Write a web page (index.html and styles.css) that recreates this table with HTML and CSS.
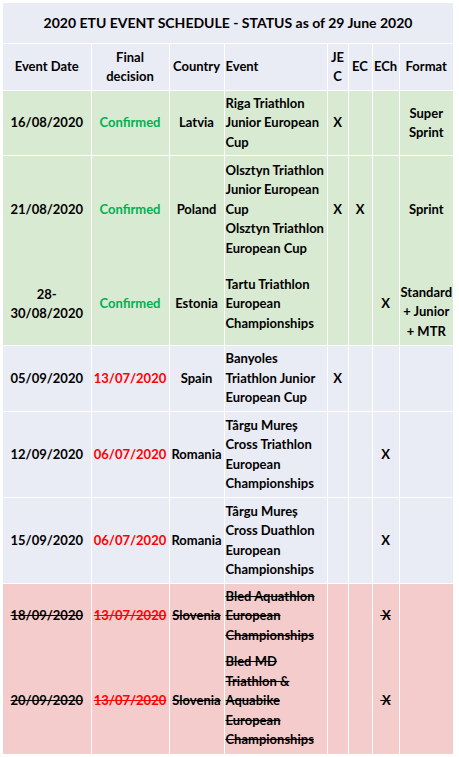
FILE: index.html
```html
<!DOCTYPE html>
<html lang="en">
<head>
<meta charset="utf-8">
<title>2020 ETU Event Schedule</title>
<link rel="stylesheet" href="styles.css">
</head>
<body>
<table class="sched">
  <colgroup>
    <col class="c-date"><col class="c-dec"><col class="c-country"><col class="c-event">
    <col class="c-jec"><col class="c-ec"><col class="c-ech"><col class="c-format">
  </colgroup>
  <tr class="title">
    <th colspan="8">2020 ETU EVENT SCHEDULE - STATUS as of 29 June 2020</th>
  </tr>
  <tr class="head">
    <th>Event Date</th>
    <th>Final<br>decision</th>
    <th>Country</th>
    <th class="ev">Event</th>
    <th>JE<br>C</th>
    <th>EC</th>
    <th>ECh</th>
    <th>Format</th>
  </tr>
  <tr class="ok r65">
    <td>16/08/2020</td>
    <td class="conf">Confirmed</td>
    <td>Latvia</td>
    <td class="ev">Riga Triathlon<br>Junior European<br>Cup</td>
    <td>X</td><td></td><td></td>
    <td>Super<br>Sprint</td>
  </tr>
  <tr class="ok r108 joined">
    <td>21/08/2020</td>
    <td class="conf">Confirmed</td>
    <td>Poland</td>
    <td class="ev">Olsztyn Triathlon<br>Junior European<br>Cup<br>Olsztyn Triathlon<br>European Cup</td>
    <td>X</td><td>X</td><td></td>
    <td>Sprint</td>
  </tr>
  <tr class="ok r83">
    <td>28-<br>30/08/2020</td>
    <td class="conf">Confirmed</td>
    <td>Estonia</td>
    <td class="ev">Tartu Triathlon<br>European<br>Championships</td>
    <td></td><td></td><td>X</td>
    <td class="low">Standard<br>+ Junior<br>+ MTR</td>
  </tr>
  <tr class="pend r66">
    <td>05/09/2020</td>
    <td class="due">13/07/2020</td>
    <td>Spain</td>
    <td class="ev">Banyoles<br>Triathlon Junior<br>European Cup</td>
    <td>X</td><td></td><td></td>
    <td></td>
  </tr>
  <tr class="pend r86">
    <td>12/09/2020</td>
    <td class="due">06/07/2020</td>
    <td>Romania</td>
    <td class="ev">Târgu Mureș<br>Cross Triathlon<br>European<br>Championships</td>
    <td></td><td></td><td>X</td>
    <td></td>
  </tr>
  <tr class="pend r86">
    <td>15/09/2020</td>
    <td class="due">06/07/2020</td>
    <td>Romania</td>
    <td class="ev">Târgu Mureș<br>Cross Duathlon<br>European<br>Championships</td>
    <td></td><td></td><td>X</td>
    <td></td>
  </tr>
  <tr class="off r65 joined">
    <td>18/09/2020</td>
    <td class="due">13/07/2020</td>
    <td>Slovenia</td>
    <td class="ev">Bled Aquathlon<br>European<br>Championships</td>
    <td></td><td></td><td>&#8201;X</td>
    <td></td>
  </tr>
  <tr class="off r105">
    <td>20/09/2020</td>
    <td class="due">13/07/2020</td>
    <td>Slovenia</td>
    <td class="ev">Bled MD<br>Triathlon &amp;<br>Aquabike<br>European<br>Championships</td>
    <td></td><td></td><td>&#8201;X</td>
    <td></td>
  </tr>
</table>
</body>
</html>
```

FILE: styles.css
```css
html, body {
  margin: 0;
  padding: 0;
  background: #ffffff;
}

body {
  padding: 3px 0 0 3px;
}

.sched {
  border-collapse: collapse;
  table-layout: fixed;
  width: 450px;
  font-family: Lato, "Open Sans", sans-serif;
  font-weight: 700;
  font-size: 13px;
  line-height: 19.4px;
  color: #000;
}

.c-date { width: 88px; }
.c-dec { width: 78px; }
.c-country { width: 55px; }
.c-event { width: 103px; }
.c-jec { width: 21px; }
.c-ec { width: 24px; }
.c-ech { width: 27px; }
.c-format { width: 54px; }

.sched th,
.sched td {
  border: 1px solid #ffffff;
  padding: 0 1px;
  text-align: center;
  vertical-align: middle;
  white-space: nowrap;
  font-weight: 700;
}

.sched .ev {
  text-align: left;
  padding-left: 1px;
}

.title th {
  height: 40px;
  font-size: 14px;
  background: #e9ebf5;
  border-left-style: hidden;
  border-top-style: hidden;
  border-right-style: hidden;
}

.head th {
  height: 46px;
  background: #e9ebf5;
}

.ok td { background: #d9ead3; }
.pend td { background: #e9ebf5; }
.off td {
  background: #f4cccc;
  text-decoration: line-through;
}

.conf { color: #00b050; }
.due { color: #ff0000; }

.joined td { border-bottom-style: hidden; }

.r65 td { height: 64px; }
.r66 td { height: 65px; }
.r83 td { height: 82px; }
.r86 td { height: 85px; }
.r105 td { height: 106px; }
.r108 td { height: 107px; }

.sched .r83 .low {
  padding-top: 16px;
  height: 66px;
}

.sched tr > :first-child { border-left-style: hidden; }
.sched tr > :last-child { border-right-style: hidden; }
```
